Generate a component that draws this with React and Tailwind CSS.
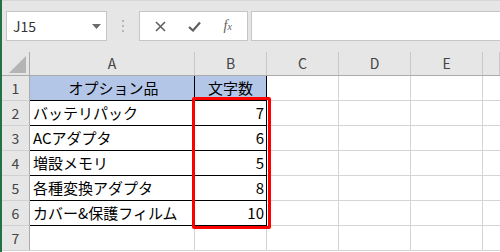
import React from 'react';

const font = "font-['Noto_Sans_CJK_JP',sans-serif]";

const cols = ['A', 'B', 'C', 'D', 'E', ''];
const rows = [
  ['オプション品', '文字数'],
  ['バッテリパック', '7'],
  ['ACアダプタ', '6'],
  ['増設メモリ', '5'],
  ['各種変換アダプタ', '8'],
  ['カバー&保護フィルム', '10'],
  null,
];

function Toolbar() {
  return (
    <div className="h-[52px] shrink-0 bg-[#e6e6e6] border-t border-[#d6d6d6] flex items-start pt-[10px] pl-[4px]">
      <div className="w-[101px] h-[30px] bg-white border border-[#c6c6c6] flex items-center justify-between pl-[6px] pr-[5px]">
        <span className={`${font} text-[14px] text-[#333]`}>J15</span>
        <svg width="9" height="5" viewBox="0 0 9 5"><path d="M0 0h9L4.5 5z" fill="#6b6b6b" /></svg>
      </div>
      <div className="w-[32px] h-[30px] flex flex-col items-center justify-center gap-[3px]">
        <span className="w-[2px] h-[2px] bg-[#b5b5b5]" />
        <span className="w-[2px] h-[2px] bg-[#b5b5b5]" />
        <span className="w-[2px] h-[2px] bg-[#b5b5b5]" />
      </div>
      <div className="w-[109px] h-[30px] bg-white border border-[#c6c6c6] flex items-center justify-around px-[4px]">
        <svg width="11" height="11" viewBox="0 0 11 11">
          <path d="M1 1l9 9M10 1l-9 9" stroke="#606060" strokeWidth="1.6" />
        </svg>
        <svg width="13" height="11" viewBox="0 0 13 11">
          <path d="M1 6l4 3.5L12 1.5" stroke="#606060" strokeWidth="2.2" fill="none" />
        </svg>
        <span className="font-['Liberation_Serif',serif] italic text-[14px] text-[#606060] leading-none">
          f<span className="text-[10px]">x</span>
        </span>
      </div>
      <div className="ml-[3px] flex-1 h-[30px] bg-white border border-[#c6c6c6] border-r-0" />
    </div>
  );
}

function Sheet() {
  const grid = 'grid grid-cols-[28px_165px_72px_72px_72px_72px_1fr]';
  return (
    <div className={`${font} flex-1`}>
      <div className={`${grid} h-[24px] bg-[#e6e6e6] border-b border-[#ababab]`}>
        <div className="border-r border-[#ababab] flex items-end justify-end pr-[3px] pb-[2px]">
          <svg width="17" height="17" viewBox="0 0 17 17"><path d="M17 0v17H0z" fill="#b4b4b4" /></svg>
        </div>
        {cols.map((c, i) => (
          <div key={i} className="border-r border-[#c8c8c8] flex items-center justify-center text-[14px] text-[#444]">
            {c}
          </div>
        ))}
      </div>
      {rows.map((r, i) => {
        const n = i + 1;
        const inTable = r !== null;
        const head = i === 0;
        return (
          <div key={n} className={`${grid} h-[25px]`}>
            <div className="bg-[#e6e6e6] border-r border-[#ababab] border-b border-b-[#d0d0d0] flex items-center justify-center text-[14px] text-[#444]">
              {n}
            </div>
            <div className={`border-r border-b flex items-center pl-[3px] text-[15px] text-black ${inTable ? 'border-black' : 'border-[#d4d4d4]'} ${head ? 'bg-[#b4c6e7] justify-center' : ''}`}>
              {r && r[0]}
            </div>
            <div className={`border-r border-b flex items-center text-[15px] text-black ${inTable ? 'border-black' : 'border-[#d4d4d4]'} ${head ? 'bg-[#b4c6e7] justify-center' : 'justify-end pr-[2px]'}`}>
              {r && r[1]}
            </div>
            <div className="border-r border-b border-[#d4d4d4]" />
            <div className="border-r border-b border-[#d4d4d4]" />
            <div className="border-r border-b border-[#d4d4d4]" />
            <div className="border-b border-[#d4d4d4]" />
          </div>
        );
      })}
    </div>
  );
}

export default function App() {
  return (
    <div className="relative flex w-[500px] h-[252px] overflow-hidden bg-white">
      <div className="w-[2px] shrink-0 bg-[#217346]" />
      <div className="flex-1 flex flex-col">
        <Toolbar />
        <Sheet />
      </div>
      <div className="absolute left-[192px] top-[97px] w-[79px] h-[132px] border-[3px] border-[#ff0000] rounded-[2px]" />
    </div>
  );
}
